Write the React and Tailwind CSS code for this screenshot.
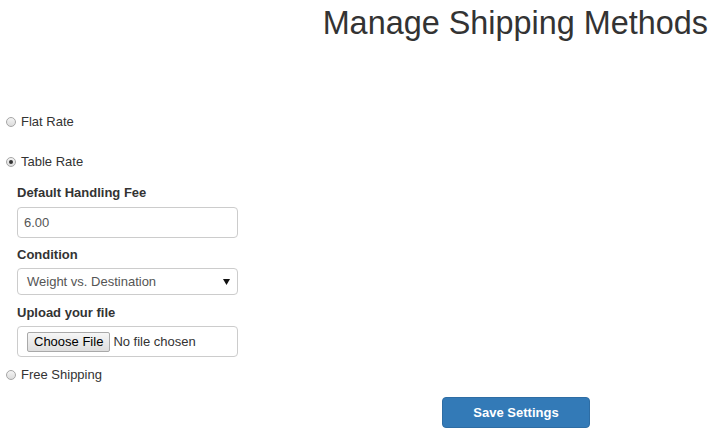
import React from 'react';

const Radio = ({ checked, label }) => (
  <label className="flex items-center gap-[5px] text-[13px] text-[#333] leading-[18px]">
    <span className="w-[10px] h-[10px] rounded-full border border-[#a6a6a6] bg-gradient-to-b from-[#f4f4f4] to-[#dcdcdc] flex items-center justify-center">
      {checked && <span className="w-[4px] h-[4px] rounded-full bg-[#333]" />}
    </span>
    <span>{label}</span>
  </label>
);

const Label = ({ children }) => (
  <div className="text-[13px] font-bold text-[#333] leading-[18px]">{children}</div>
);

export default function App() {
  return (
    <div className="w-[726px] h-[442px] bg-white font-['Liberation_Sans',Arial,sans-serif] text-[#333] relative">
      <div className="flex justify-end pr-[18px] pt-[5px]">
        <h1 className="text-[32.4px] leading-[36px] font-normal text-[#333]">Manage Shipping Methods</h1>
      </div>

      <div className="pl-[6px] mt-[72px]">
        <Radio label="Flat Rate" />
        <div className="mt-[22px]">
          <Radio checked label="Table Rate" />
        </div>

        <div className="pl-[11px] mt-[13px] w-[232px]">
          <Label>Default Handling Fee</Label>
          <div className="mt-[5px] h-[31px] border border-[#ccc] rounded-[4px] flex items-center px-[6px] text-[13px] text-[#555]">
            6.00
          </div>

          <div className="mt-[8px]">
            <Label>Condition</Label>
          </div>
          <div className="mt-[4px] h-[27px] border border-[#ccc] rounded-[4px] flex items-center justify-between pl-[9px] pr-[7px] text-[13px] text-[#555]">
            <span>Weight vs. Destination</span>
            <svg width="7" height="6" viewBox="0 0 7 6"><path d="M0 0h7L3.5 6z" fill="#111" /></svg>
          </div>

          <div className="mt-[9px]">
            <Label>Upload your file</Label>
          </div>
          <div className="mt-[4px] h-[31px] border border-[#ccc] rounded-[4px] flex items-center pl-[9px] text-[13px] text-[#333]">
            <span className="h-[20px] px-[6px] border border-[#a9a9a9] rounded-[2px] bg-gradient-to-b from-[#f6f6f6] to-[#dedede] flex items-center text-[13px] text-black leading-none">
              Choose File
            </span>
            <span className="ml-[3px] text-[#333]">No file chosen</span>
          </div>
        </div>

        <div className="mt-[9px]">
          <Radio label="Free Shipping" />
        </div>
      </div>

      <div className="flex justify-start pl-[442px] mt-[13px]">
        <button className="w-[148px] h-[31px] rounded-[4px] bg-[#337ab7] border border-[#2e6da4] text-white text-[13px] font-bold">
          Save Settings
        </button>
      </div>
    </div>
  );
}
